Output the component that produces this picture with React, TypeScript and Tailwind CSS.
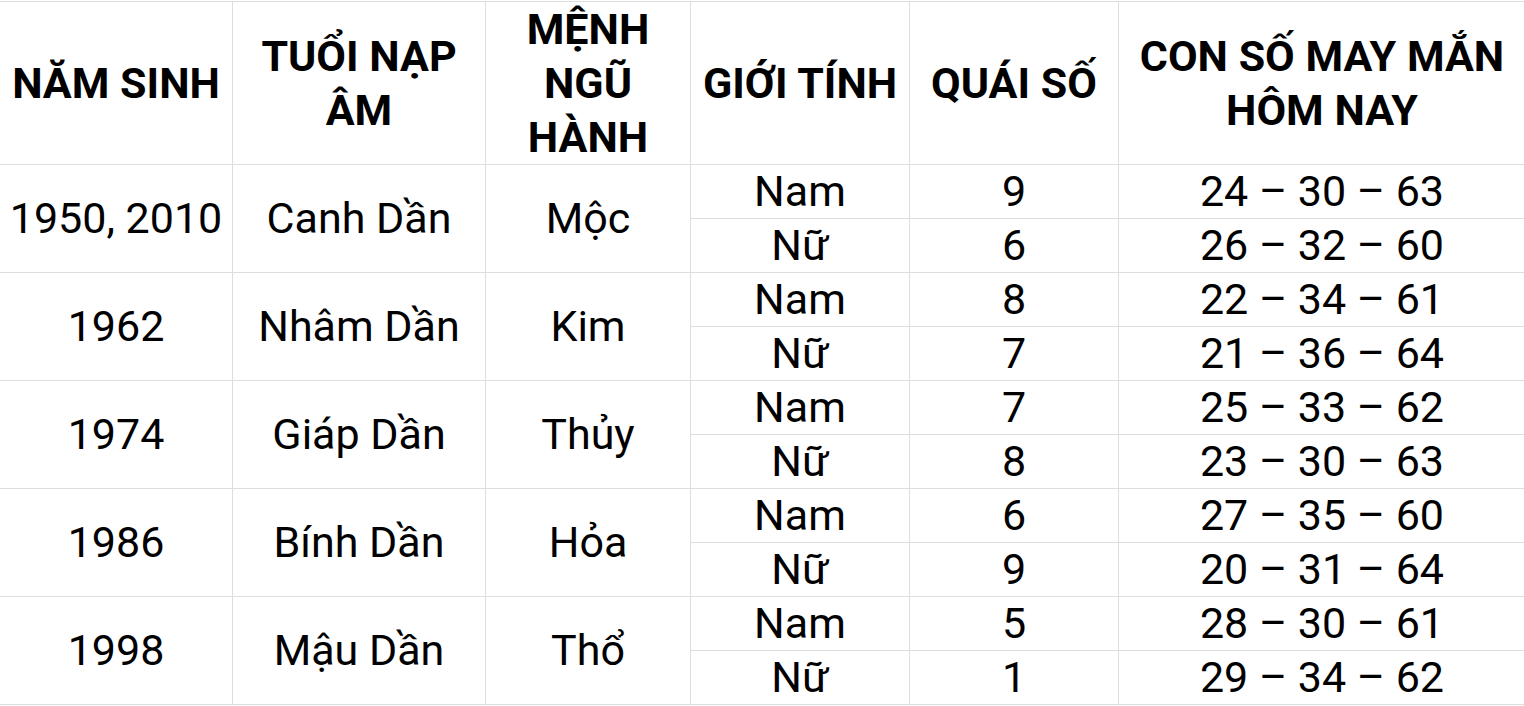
const groups = [
  { year: "1950, 2010", napAm: "Canh Dần", menh: "Mộc", rows: [["Nam", "9", "24 – 30 – 63"], ["Nữ", "6", "26 – 32 – 60"]] },
  { year: "1962", napAm: "Nhâm Dần", menh: "Kim", rows: [["Nam", "8", "22 – 34 – 61"], ["Nữ", "7", "21 – 36 – 64"]] },
  { year: "1974", napAm: "Giáp Dần", menh: "Thủy", rows: [["Nam", "7", "25 – 33 – 62"], ["Nữ", "8", "23 – 30 – 63"]] },
  { year: "1986", napAm: "Bính Dần", menh: "Hỏa", rows: [["Nam", "6", "27 – 35 – 60"], ["Nữ", "9", "20 – 31 – 64"]] },
  { year: "1998", napAm: "Mậu Dần", menh: "Thổ", rows: [["Nam", "5", "28 – 30 – 61"], ["Nữ", "1", "29 – 34 – 62"]] },
];

const th = "border border-[#dedede] font-bold text-center align-middle leading-[54px] p-0";
const td = "border border-[#dedede] text-center align-middle p-0 leading-[53px] h-[53px]";

export default function App() {
  return (
    <div className="bg-white min-h-screen overflow-hidden pt-px font-['Roboto',sans-serif] text-black text-[43px]">
      <table className="table-fixed border-collapse w-[1526px] -ml-px">
        <colgroup>
          <col className="w-[233px]" />
          <col className="w-[253px]" />
          <col className="w-[205px]" />
          <col className="w-[219px]" />
          <col className="w-[209px]" />
          <col className="w-[407px]" />
        </colgroup>
        <thead>
          <tr className="h-[163px]">
            <th className={th}>NĂM SINH</th>
            <th className={th}>TUỔI NẠP<br />ÂM</th>
            <th className={th}>MỆNH<br />NGŨ<br />HÀNH</th>
            <th className={th}>GIỚI TÍNH</th>
            <th className={th}>QUÁI SỐ</th>
            <th className={th}>CON SỐ MAY MẮN<br />HÔM NAY</th>
          </tr>
        </thead>
        <tbody>
          {groups.map((g) =>
            g.rows.map((r, i) => (
              <tr key={g.year + i}>
                {i === 0 && (
                  <>
                    <td rowSpan={2} className={td}>{g.year}</td>
                    <td rowSpan={2} className={td}>{g.napAm}</td>
                    <td rowSpan={2} className={td}>{g.menh}</td>
                  </>
                )}
                <td className={td}>{r[0]}</td>
                <td className={td}>{r[1]}</td>
                <td className={td}>{r[2]}</td>
              </tr>
            ))
          )}
        </tbody>
      </table>
    </div>
  );
}
